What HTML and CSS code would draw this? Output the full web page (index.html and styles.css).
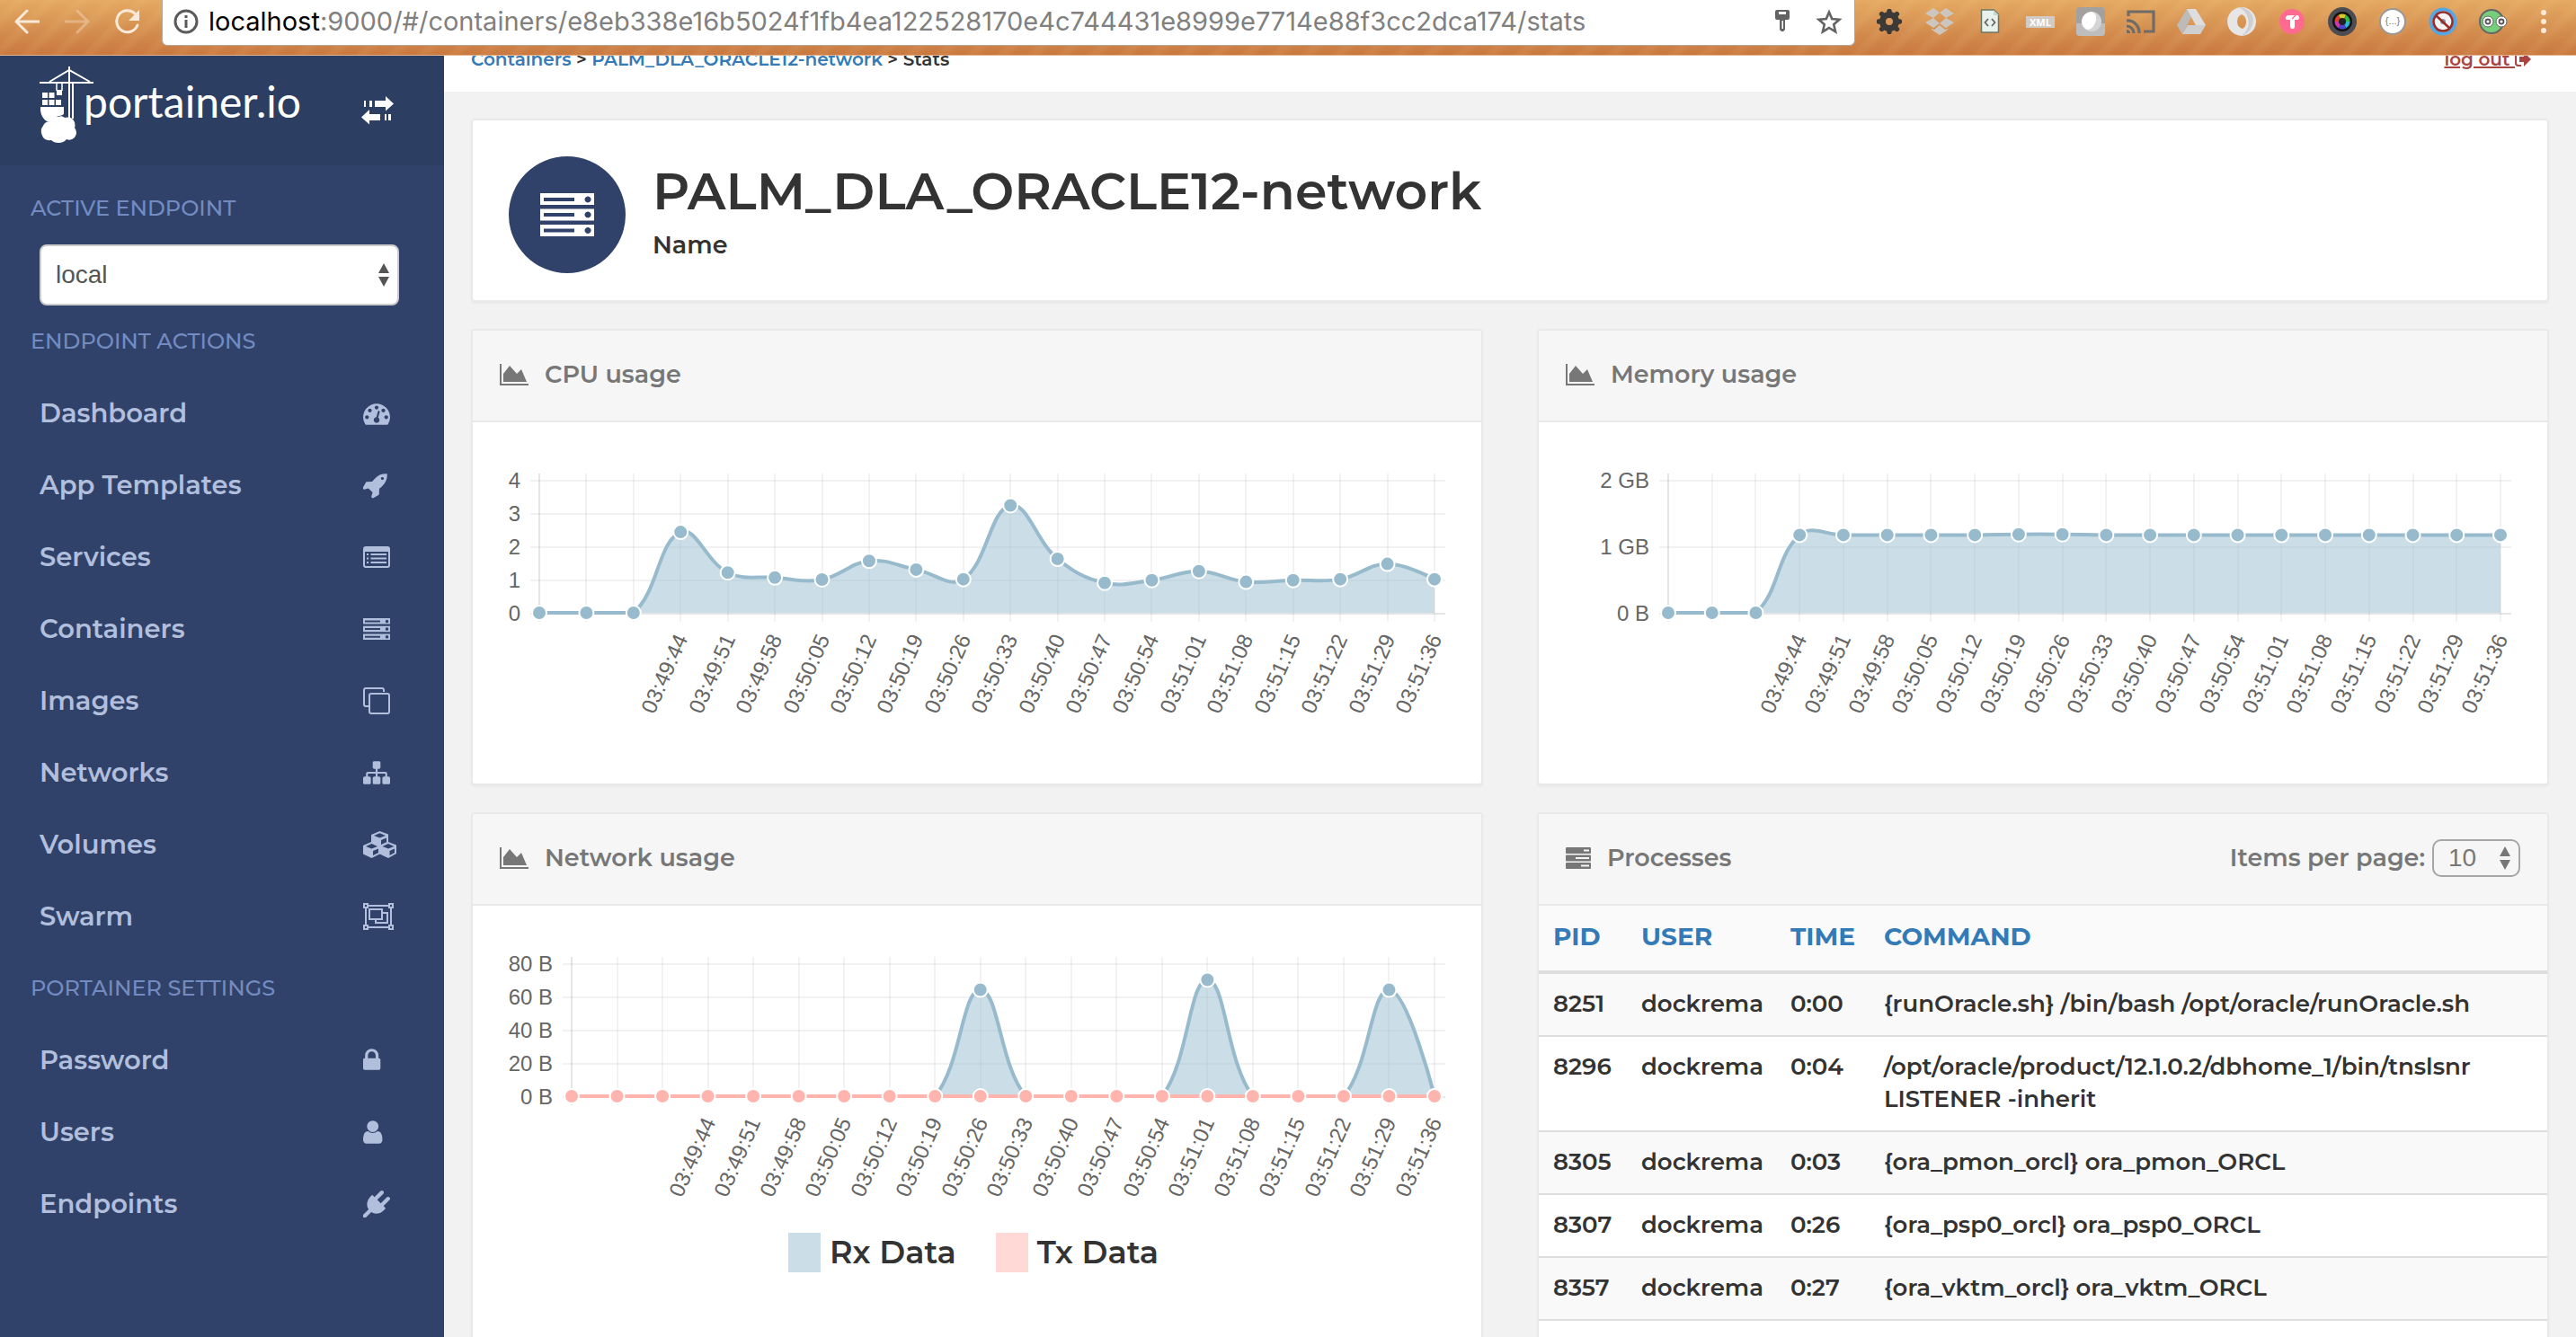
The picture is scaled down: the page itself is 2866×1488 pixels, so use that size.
FILE: index.html
```html
<!DOCTYPE html>
<html lang="en">
<head>
<meta charset="utf-8">
<title>Portainer - Container stats</title>
<link rel="stylesheet" href="styles.css">
</head>
<body>
<svg class="defs" aria-hidden="true">
  <symbol id="i-server" viewBox="0 0 60 48">
    <path fill-rule="evenodd" d="M0 0h60v13H0zM4 5v4h34V5zM53 3.500a3.500 3.500 0 1 0 .1 0zM0 17.500h60v13H0zM4 22v4h34v-4zM53 20.500a3.500 3.500 0 1 0 .1 0zM0 35h60v13H0zM4 39.500v4h34v-4zM53 38a3.500 3.500 0 1 0 .1 0z"/>
  </symbol>
  <symbol id="i-area" viewBox="0 0 32 24">
    <path d="M0 0h2v22h30v2H0zM4 20v-9l7-9 8 9 5-5 6 14z"/>
  </symbol>
</svg>

<header class="browser">
  <button class="tool" aria-label="Back"><svg width="28" height="28" viewBox="0 0 28 28" class="line"><path d="M14 2L2 14l12 12M2 14h25"/></svg></button>
  <button class="tool faded" aria-label="Forward"><svg width="28" height="28" viewBox="0 0 28 28" class="line"><path d="M14 2l12 12-12 12M26 14H1"/></svg></button>
  <button class="tool" aria-label="Reload"><svg width="28" height="28" viewBox="0 0 28 28"><path class="line" d="M25 18A12 12 0 1 1 22 5"/><path fill="#fbe9d9" d="M27 1v12H15z"/></svg></button>
  <div class="address">
    <svg width="28" height="28" viewBox="0 0 28 28"><circle cx="14" cy="14" r="12" fill="none" stroke="#5a5a5a" stroke-width="3"/><path fill="#5a5a5a" d="M12.500 7h3v3h-3zM12.500 12h3v9h-3z"/></svg>
    <span class="url"><b>localhost</b>:9000/#/containers/e8eb338e16b5024f1fb4ea122528170e4c744431e8999e7714e88f3cc2dca174/stats</span>
    <button class="inner-tool" aria-label="Saved password"><svg width="16" height="26" viewBox="0 0 16 26"><path fill="#636363" fill-rule="evenodd" d="M2 0h12q2 0 2 2v7q0 2-2 2h-3v11l-2 2H7l-2-2V11H2q-2 0-2-2V2q0-2 2-2zM4 2v3h8V2zM7.500 12v9h1.500v-9z"/></svg></button>
    <button class="inner-tool" aria-label="Bookmark"><svg width="30" height="28" viewBox="0 0 30 28"><path fill="none" stroke="#636363" stroke-width="2.600" d="M15 3.500l3.200 7.600 8.200.7-6.200 5.400 1.900 8.100-7.100-4.300-7.100 4.300 1.900-8.100-6.200-5.400 8.200-.7z"/></svg></button>
  </div>
  <button class="tool" aria-label="Settings extension"><svg width="28" height="28" viewBox="-14 -14 28 28"><circle r="7.500" fill="none" stroke="#3c3a37" stroke-width="7"/><path stroke="#3c3a37" stroke-width="5.500" stroke-linecap="round" d="M0-11v-.5M0 11v.5M-11 0h-.5M11 0h.5M-8-8l-.4-.4M8 8l.4.4M-8 8l-.4.4M8-8l.4-.4"/></svg></button>
  <button class="tool" aria-label="Dropbox"><svg width="32" height="30" viewBox="0 0 32 30"><path fill="#cdc6bf" d="M9 0l7 5-7 6-9-5zM23 0l9 6-9 5-7-6zM0 16l9-5 7 6-7 5zM32 16l-9-5-7 6 7 5zM7 23l3 1 6-5 6 5 3-1v1l-9 6-9-6z"/></svg></button>
  <button class="tool" aria-label="Source viewer"><svg width="22" height="28" viewBox="0 0 22 28"><path fill="#e9f1ed" stroke="#6c7763" stroke-width="1.500" d="M1.500 1h14l5 5v20h-19z"/><path fill="#c3d6cf" d="M15 1v6h6z"/><path fill="none" stroke="#666" stroke-width="1.800" d="M9 11l-3.500 4L9 19M13 11l3.500 4-3.500 4"/></svg></button>
  <button class="tool" aria-label="XML viewer"><span class="xml">XML</span></button>
  <button class="tool" aria-label="Egg extension"><svg width="32" height="32" viewBox="0 0 32 32"><rect width="32" height="32" rx="4" fill="#a3a19f"/><path fill="#bdbdbd" d="M0 18h32v10q0 4-4 4H4q-4 0-4-4z"/><circle cx="17" cy="16" r="11" fill="#d5d5d5"/><path fill="#fff" d="M17 5q6 2 5 9-2 10-9 11-7-2-7-10Q8 6 17 5z"/></svg></button>
  <button class="tool" aria-label="Cast"><svg width="32" height="26" viewBox="0 0 32 26"><path fill="none" stroke="#6f6b66" stroke-width="3.200" d="M2 7V2h28v22H19M0 12a13 13 0 0 1 14 14M0 18a8 8 0 0 1 8 8"/><path fill="#6f6b66" d="M0 22a4 4 0 0 1 4 4H0z"/></svg></button>
  <button class="tool" aria-label="Drive"><svg width="32" height="28" viewBox="0 0 32 28"><path fill="#bdbbb9" d="M11 0l5 9L6 28 0 18z"/><path fill="#dedede" d="M11 0h10l11 18H21z"/><path fill="#cfcfcf" d="M6 28l6-10h20l-6 10z"/></svg></button>
  <button class="tool" aria-label="Ring extension"><svg width="32" height="32" viewBox="0 0 32 32"><path fill="#e6e6e6" fill-rule="evenodd" d="M16 0a16 16 0 1 0 .1 0zM16 8q5 2 5 8t-4 8q-6-2-6-8t5-8z"/><path fill="#cfcfcf" d="M16 0q16 5 12 20-4 10-12 12 10-8 7-20-2-8-9-11z"/></svg></button>
  <button class="tool" aria-label="Toggl"><svg width="28" height="28" viewBox="0 0 28 28"><circle cx="14" cy="14" r="14" fill="#ff6a8e"/><path fill="#fff" d="M9 7h11q2 0 2 2.500T20 12h-3v8q0 2-2.500 2T12 20v-8H8q-2-1-1-3z"/><path stroke="#ff6a8e" stroke-width="1.200" d="M14 11l4-4"/></svg></button>
  <button class="tool" aria-label="Camera"><svg width="32" height="32" viewBox="0 0 32 32"><circle cx="16" cy="16" r="16" fill="#4c4d52"/><circle cx="16" cy="16" r="11" fill="#121212"/><g fill="none" stroke-width="5"><path stroke="#e0442e" d="M10 16a6 6 0 0 1 3-5"/><path stroke="#d9c928" d="M13 11a6 6 0 0 1 6 0"/><path stroke="#35b54a" d="M19 11a6 6 0 0 1 3 5"/><path stroke="#2bb7d6" d="M22 16a6 6 0 0 1-3 5"/><path stroke="#4b46d6" d="M19 21a6 6 0 0 1-6 0"/><path stroke="#cf37b2" d="M13 21a6 6 0 0 1-3-5"/></g><circle cx="16" cy="16" r="4" fill="#222"/></svg></button>
  <button class="tool" aria-label="JSON viewer"><span class="json">{...}</span></button>
  <button class="tool" aria-label="Blocker"><svg width="32" height="32" viewBox="0 0 32 32"><circle cx="16" cy="16" r="13.500" fill="#f3f3f3" stroke="#55a7e4" stroke-width="4"/><circle cx="16" cy="16" r="3" fill="#8493a3"/><path fill="none" stroke="#9b2c2a" stroke-width="2.600" d="M16 5.500a10.500 10.500 0 1 0 .1 0zM8 9l16 15"/></svg></button>
  <button class="tool" aria-label="Green face"><svg width="32" height="28" viewBox="0 0 32 28"><circle cx="14" cy="14" r="13" fill="#76ce7b" stroke="#666" stroke-width="2"/><g fill="#fff" stroke="#666" stroke-width="1"><circle cx="10" cy="14" r="6"/><circle cx="25" cy="14" r="6"/></g><g fill="none" stroke="#555" stroke-width="1.800"><circle cx="10" cy="14" r="2.500"/><circle cx="25" cy="14" r="2.500"/></g></svg></button>
  <button class="tool" aria-label="Menu"><svg width="8" height="28" viewBox="0 0 8 28"><g fill="#fbe9d9"><circle cx="4" cy="4" r="3"/><circle cx="4" cy="14" r="3"/><circle cx="4" cy="24" r="3"/></g></svg></button>
</header>

<div class="app">
  <nav class="sidebar">
    <div class="brand">
      <a class="logo" href="#/">
        <svg width="62" height="86" viewBox="0 0 62 86">
          <g fill="none" stroke="#fff" stroke-width="2"><path d="M1 18h60M12 17L34 4l23 13M34 0v58M38 18v40"/><path stroke-width="1.500" d="M20 19v8M26 19v8"/></g>
          <path fill="#fff" d="M20 26h6v6h-6zM4 29h6v6H4zM11.500 29h6v6h-6zM4 37h6v6H4zM11.500 37h6v6h-6zM19 37h6v6h-6zM2 45h26v8q-3 2-5 2-6 1-8 6H9q-6-4-7-12z"/>
          <path fill="#fff" d="M13 61q3-6 9-5 4-2 7 1 8-2 11 5 1 4 0 6 4 6 0 11-4 4-9 2-3 4-9 4-5 0-8-3-8 1-10-5-3-6 1-11 2-5 8-5z"/>
        </svg>
        <span>portainer.io</span>
      </a>
      <button class="toggle" aria-label="Toggle sidebar"><svg width="36" height="32" viewBox="0 0 36 32"><path fill="#fff" d="M3 5h2v7H3zM9 5h3v7H9zM15 5h12V0l9 8.500-9 8V12H15zM33 20h-3v7h3zM28 20h-2v7h2zM21 20H9v-5l-9 8.500 9 8V27h12z"/></svg></button>
    </div>
    <label class="group" for="endpoint">ACTIVE ENDPOINT</label>
    <select class="endpoint" id="endpoint"><option>local</option></select>
    <h2 class="group">ENDPOINT ACTIONS</h2>
    <ul>
      <li><a href="#/dashboard">Dashboard<svg width="30" height="30" viewBox="0 0 1792 1792"><path d="M384 1152q0-53-37.500-90.500t-90.500-37.500-90.500 37.500-37.500 90.500 37.500 90.500 90.500 37.500 90.500-37.500 37.500-90.500zm192-448q0-53-37.500-90.500t-90.500-37.500-90.500 37.500-37.500 90.500 37.500 90.500 90.500 37.500 90.500-37.500 37.500-90.500zm428 481l101-382q6-26-7.500-48.500t-38.500-29.500-48 6.500-30 39.500l-101 382q-60 5-107 43.500t-63 98.500q-20 77 20 146t117 89 146-20 89-117q16-60-6-117t-72-91zm660-33q0-53-37.500-90.500t-90.500-37.500-90.500 37.500-37.500 90.500 37.500 90.500 90.500 37.500 90.500-37.500 37.500-90.500zm-640-640q0-53-37.500-90.500t-90.500-37.500-90.500 37.500-37.500 90.500 37.500 90.500 90.500 37.500 90.500-37.500 37.500-90.500zm448 192q0-53-37.500-90.500t-90.500-37.500-90.500 37.500-37.500 90.500 37.500 90.500 90.500 37.500 90.500-37.500 37.500-90.500zm320 448q0 261-141 483-19 29-54 29h-1402q-35 0-54-29-141-221-141-483 0-182 71-348t191-286 286-191 348-71 348 71 286 191 191 286 71 348z"/></svg></a></li>
      <li><a href="#/templates">App Templates<svg width="30" height="30" viewBox="64 0 1792 1792"><path d="M1440 448q0-40-28-68t-68-28-68 28-28 68 28 68 68 28 68-28 28-68zm224-288q0 249-75.500 430.500t-253.500 360.500q-81 80-195 176l-20 379q-2 16-16 26l-384 224q-7 4-16 4-12 0-23-9l-64-64q-13-14-8-32l85-276-281-281-276 85q-3 1-9 1-14 0-23-9l-64-64q-17-19-5-39l224-384q10-14 26-16l379-20q96-114 176-195 188-187 358-258t431-71q14 0 24 9.500t10 22.500z"/></svg></a></li>
      <li><a href="#/services">Services<svg width="30" height="24" viewBox="0 0 30 24"><path fill-rule="evenodd" d="M3 0h24q3 0 3 3v18q0 3-3 3H3q-3 0-3-3V3q0-3 3-3zM2 6v15q0 1 1 1h24q1 0 1-1V6zM4 8h2v2H4zM8.500 8H26v2H8.500zM4 12.500h2v2H4zM8.500 12.500H26v2H8.500zM4 17h2v2H4zM8.500 17H26v2H8.500z"/></svg></a></li>
      <li><a href="#/containers">Containers<svg width="30" height="24"><use href="#i-server"/></svg></a></li>
      <li><a href="#/images">Images<svg width="30" height="30" viewBox="0 0 30 30"><g fill="none" stroke="#b2bfdc" stroke-width="2"><rect x="7" y="7" width="22" height="22" rx="2"/><path d="M23 5V3q0-2-2-2H3Q1 1 1 3v16q0 2 2 2h3"/></g></svg></a></li>
      <li><a href="#/networks">Networks<svg width="30" height="30" viewBox="0 0 1792 1792"><path d="M1792 1248v320q0 40-28 68t-68 28h-320q-40 0-68-28t-28-68v-320q0-40 28-68t68-28h96v-192h-512v192h96q40 0 68 28t28 68v320q0 40-28 68t-68 28h-320q-40 0-68-28t-28-68v-320q0-40 28-68t68-28h96v-192h-512v192h96q40 0 68 28t28 68v320q0 40-28 68t-68 28h-320q-40 0-68-28t-28-68v-320q0-40 28-68t68-28h96v-192q0-52 38-90t90-38h512v-192h-96q-40 0-68-28t-28-68v-320q0-40 28-68t68-28h320q40 0 68 28t28 68v320q0 40-28 68t-68 28h-96v192h512q52 0 90 38t38 90v192h96q40 0 68 28t28 68z"/></svg></a></li>
      <li><a href="#/volumes">Volumes<svg width="37" height="30" viewBox="0 0 37 30"><path fill-rule="evenodd" d="M18.500 0L28 3.500V12l9 3.500V25l-9 5-9.500-4.500L9.500 30 0 25.500V16l9-4V4zM18.500 2.300L12 5l6.500 2.500L25 5zM20 10v5l6-2.700V7.500zM9.500 14L3 17l6.500 2.500L16 17zM11 22v5l6-3v-4.500zM28 14l-6.500 3 6.500 2.500 6.500-2.500zM29.500 22v5l5.500-3v-4.500z"/></svg></a></li>
      <li><a href="#/swarm">Swarm<svg width="34" height="30" viewBox="0 0 34 30"><g fill="none" stroke="#b2bfdc" stroke-width="2"><path d="M3 4v22M31 4v22M4 3h26M4 27h26"/><path d="M7 7h14v11H7zM22 11h5v11H14v-4"/></g><path fill-rule="evenodd" d="M0 0h6v6H0zM2 2v2h2V2zM28 0h6v6h-6zM30 2v2h2V2zM0 24h6v6H0zM2 26v2h2v-2zM28 24h6v6h-6zM30 26v2h2v-2z"/></svg></a></li>
    </ul>
    <h2 class="group">PORTAINER SETTINGS</h2>
    <ul>
      <li><a href="#/password">Password<svg width="20" height="30" viewBox="320 0 1195 1792"><path d="M640 768h512v-192q0-106-75-181t-181-75-181 75-75 181v192zm832 96v576q0 40-28 68t-68 28h-960q-40 0-68-28t-28-68v-576q0-40 28-68t68-28h32v-192q0-184 132-316t316-132 316 132 132 316v192h32q40 0 68 28t28 68z"/></svg></a></li>
      <li><a href="#/users">Users<svg width="22" height="30" viewBox="256 0 1314 1792"><path d="M1536 1399q0 109-62.500 187t-150.500 78h-854q-88 0-150.500-78t-62.500-187q0-85 8.500-160.500t31.500-152 58.500-131 94-89 134.500-34.500q131 128 313 128t313-128q76 0 134.500 34.500t94 89 58.500 131 31.500 152 8.500 160.500zm-256-887q0 159-112.500 271.500t-271.500 112.500-271.500-112.500-112.500-271.500 112.500-271.500 271.500-112.500 271.500 112.500 112.500 271.500z"/></svg></a></li>
      <li><a href="#/endpoints">Endpoints<svg width="30" height="30" viewBox="0 0 1792 1792"><path d="M1755 453q37 38 37 90.500t-37 90.500l-401 400 150 150-160 160q-163 163-389.500 186.500t-411.500-100.500l-362 362h-181v-181l362-362q-124-185-100.500-411.500t186.500-389.500l160-160 150 150 400-401q38-37 91-37t90 37 37 90.500-37 90.500l-400 401 234 234 401-400q38-37 91-37t90 37z"/></svg></a></li>
    </ul>
  </nav>

  <main class="content">
    <div class="page-header">
      <div class="crumbs"><a href="#/containers">Containers</a> &gt; <a href="#/container">PALM_DLA_ORACLE12-network</a> &gt; Stats</div>
      <a class="logout" href="#/auth"><u>log out </u><svg width="18" height="20" viewBox="0 0 18 20"><path fill="none" stroke="#a94442" stroke-width="2" d="M7 3H4Q1 3 1 6v8q0 3 3 3h3"/><path fill="#a94442" d="M5 7h5V2l8 8-8 8v-5H5z"/></svg></a>
    </div>

    <div class="widgets">
      <section class="card summary">
        <span class="badge"><svg width="60" height="48"><use href="#i-server"/></svg></span>
        <div class="summary-text">
          <h1>PALM_DLA_ORACLE12-network</h1>
          <p>Name</p>
        </div>
      </section>

      <section class="card">
        <h3><svg width="32" height="24"><use href="#i-area"/></svg>CPU usage</h3>
        <svg class="chart" id="cpu" viewBox="0 0 1122 402"></svg>
      </section>

      <section class="card">
        <h3><svg width="32" height="24"><use href="#i-area"/></svg>Memory usage</h3>
        <svg class="chart" id="memory" viewBox="0 0 1122 402"></svg>
      </section>

      <section class="card">
        <h3><svg width="32" height="24"><use href="#i-area"/></svg>Network usage</h3>
        <svg class="chart" id="network" viewBox="0 0 1122 364"></svg>
        <ul class="legend">
          <li><i class="rx"></i>Rx Data</li>
          <li><i class="tx"></i>Tx Data</li>
        </ul>
      </section>

      <section class="card">
        <h3><svg width="28" height="24" viewBox="0 0 28 24"><path fill-rule="evenodd" d="M1 0h26q1 0 1 1v5q0 1-1 1H1Q0 7 0 6V1q0-1 1-1zM20 2.500v2h6v-2zM1 8.500h26q1 0 1 1v5q0 1-1 1H1q-1 0-1-1v-5q0-1 1-1zM11 11v2h15v-2zM1 17h26q1 0 1 1v5q0 1-1 1H1q-1 0-1-1v-5q0-1 1-1zM17 19.500v2h9v-2z"/></svg>Processes
          <span class="pager"><label for="per-page">Items per page:</label><select id="per-page"><option>10</option></select></span>
        </h3>
        <table>
          <thead><tr><th class="pid"><a href="#pid">PID</a></th><th class="user"><a href="#user">USER</a></th><th class="time"><a href="#time">TIME</a></th><th><a href="#command">COMMAND</a></th></tr></thead>
          <tbody>
            <tr><td>8251</td><td>dockrema</td><td>0:00</td><td>{runOracle.sh} /bin/bash /opt/oracle/runOracle.sh</td></tr>
            <tr><td>8296</td><td>dockrema</td><td>0:04</td><td>/opt/oracle/product/12.1.0.2/dbhome_1/bin/tnslsnr LISTENER -inherit</td></tr>
            <tr><td>8305</td><td>dockrema</td><td>0:03</td><td>{ora_pmon_orcl} ora_pmon_ORCL</td></tr>
            <tr><td>8307</td><td>dockrema</td><td>0:26</td><td>{ora_psp0_orcl} ora_psp0_ORCL</td></tr>
            <tr><td>8357</td><td>dockrema</td><td>0:27</td><td>{ora_vktm_orcl} ora_vktm_ORCL</td></tr>
          </tbody>
        </table>
      </section>
    </div>
  </main>
</div>
<script src="charts.js"></script>
</body>
</html>
```
FILE: styles.css
```css
* { box-sizing: border-box; }

body {
  margin: 0;
  height: 100vh;
  display: flex;
  flex-direction: column;
  overflow: hidden;
  font: 600 26px/36px Montserrat, Inter, "Liberation Sans", sans-serif;
  color: #333;
  background: #f2f2f2;
}

h1, h2, h3, p, ul { margin: 0; padding: 0; font-weight: 600; }
ul { list-style: none; }
a { color: #337ab7; text-decoration: none; }
button { padding: 0; border: 0; background: none; font: inherit; }
svg { display: block; flex: none; }
.defs { position: absolute; width: 0; height: 0; }

/* Browser bar */
.browser {
  flex: none;
  display: flex;
  height: 62px;
  padding: 0 8px 0 2px;
  border-bottom: 1px solid #e6b48d;
  background:
    repeating-linear-gradient(135deg, rgba(255, 220, 160, 0) 0 9px, rgba(255, 220, 160, .08) 14px 18px, rgba(255, 220, 160, 0) 24px),
    linear-gradient(#e5aa63, #d48e4f 55%, #c9783f);
}
.tool { flex: none; width: 56px; height: 48px; display: grid; place-items: center; }
.faded { opacity: .35; }
.line { fill: none; stroke: #fbe9d9; stroke-width: 3; stroke-linecap: round; }
.address {
  flex: 1;
  min-width: 0;
  display: flex;
  align-items: center;
  height: 51px;
  margin: 0 10px;
  padding: 0 2px 2px 12px;
  border: solid #b4a79a;
  border-width: 0 1px 1px;
  border-radius: 0 0 6px 6px;
  background: #fff;
}
.url {
  flex: 1;
  min-width: 0;
  padding-left: 11px;
  overflow: hidden;
  white-space: nowrap;
  font: 400 29px/36px Inter, sans-serif;
  color: #808080;
}
.url b { font-weight: 400; color: #000; }
.inner-tool { width: 52px; display: grid; place-items: center; }
.xml { padding: 0 4px; background: #d2cbc5; color: #fff; font: 700 11px/13px "Open Sans", sans-serif; }
.json {
  width: 30px;
  height: 30px;
  border: 2px solid #989898;
  border-radius: 50%;
  background: #fff;
  color: #777;
  font: 400 11px/24px "Liberation Sans", sans-serif;
}

.app { flex: 1; min-height: 0; display: flex; }

/* Sidebar */
.sidebar { flex: none; width: 494px; background: #30426a; overflow: hidden; }
.brand { display: flex; height: 122px; margin-bottom: 8px; padding: 12px 56px 0 43px; background: #2d3e63; }
.logo { flex: 1; display: flex; height: 86px; color: #fff; font: 400 48px/78px Lato, sans-serif; }
.logo span { margin-left: -12px; }
.toggle { height: 98px; display: grid; place-items: center; }
.group { display: block; padding-left: 34px; font-size: 24px; font-weight: 500; line-height: 80px; color: #738bc0; }
select { appearance: none; font: 400 28px/36px "Liberation Sans", sans-serif; }
.endpoint {
  display: block;
  width: 400px;
  height: 68px;
  margin-left: 44px;
  padding: 0 16px;
  border: 2px solid #ccc;
  border-radius: 8px;
  color: #555;
  background: #fff url("data:image/svg+xml,%3Csvg xmlns='http://www.w3.org/2000/svg' width='14' height='26'%3E%3Cpath fill='%23555' d='M7 0l6 11H1zM7 26l6-11H1z'/%3E%3C/svg%3E") no-repeat right 8px center;
}
.sidebar li a {
  display: grid;
  grid-template-columns: 1fr 90px;
  align-items: center;
  height: 80px;
  padding-left: 44px;
  font-size: 29px;
  color: #b2bfdc;
}
.sidebar li svg { fill: #b2bfdc; }

/* Content */
.content { flex: 1; min-width: 0; overflow: hidden; }
.page-header {
  display: flex;
  justify-content: space-between;
  margin-top: -8px;
  padding: 0 50px 24px 30px;
  background: #fff;
  font-size: 20px;
  line-height: 24px;
}
.logout { display: flex; align-items: center; color: #a94442; }
.logout u { white-space: pre; }
.widgets { display: grid; grid-template-columns: 1fr 1fr; gap: 30px 60px; padding: 30px; }
.card {
  min-width: 0;
  border: 2px solid #e9e9e9;
  border-radius: 4px;
  background: #fff;
  box-shadow: 0 2px 2px rgba(0, 0, 0, .04);
}
.summary { grid-column: 1 / -1; display: flex; align-items: center; gap: 30px; height: 204px; padding: 10px 40px 0; }
.badge { display: grid; place-items: center; width: 130px; height: 130px; border-radius: 50%; background: #30426a; fill: #fff; }
.summary-text { padding-bottom: 6px; }
.summary h1 { font-size: 57px; line-height: 64px; }
.summary p { font-size: 27px; line-height: 36px; padding-top: 10px; }
.card h3 {
  display: flex;
  align-items: center;
  gap: 18px;
  height: 102px;
  padding: 0 30px 2px;
  border-bottom: 2px solid #e9e9e9;
  background: #f6f6f6;
  color: #777;
  fill: #777;
  font-size: 27px;
}
.pager { margin-left: auto; display: flex; align-items: center; gap: 8px; }
.pager select {
  width: 98px;
  height: 42px;
  padding: 0 16px;
  border: 2px solid #a6a6a6;
  border-radius: 10px;
  color: #777;
  background: url("data:image/svg+xml,%3Csvg xmlns='http://www.w3.org/2000/svg' width='14' height='26'%3E%3Cpath fill='%23777' d='M7 0l6 11H1zM7 26l6-11H1z'/%3E%3C/svg%3E") no-repeat right 8px center;
}

/* Charts */
.chart { width: 100%; height: auto; }
.chart text { font: 400 24px "Liberation Sans", sans-serif; fill: #666; text-anchor: end; dominant-baseline: central; }
.legend { display: flex; justify-content: center; gap: 44px; padding: 0 8px 100px 0; font-size: 35px; line-height: 44px; }
.legend li { display: flex; gap: 10px; }
.legend i { width: 36px; height: 44px; }
.rx { background: #cbdde6; }
.tx { background: #ffd9d6; }

/* Processes */
table { width: 100%; border-collapse: separate; border-spacing: 0; table-layout: fixed; }
th, td { padding: 16px; text-align: left; vertical-align: top; }
th { height: 76px; font-size: 28px; font-weight: 700; border-bottom: 4px solid #ddd; background: #fafafa; }
.pid { width: 98px; }
.user { width: 166px; }
.time { width: 104px; }
td { padding: 15px 16px 17px; border-bottom: 2px solid #ddd; }
tbody tr:nth-child(odd) { background: #f9f9f9; }
```
FILE: charts.js
```js
const times = ["", "", "", "03:49:44", "03:49:51", "03:49:58", "03:50:05", "03:50:12", "03:50:19",
  "03:50:26", "03:50:33", "03:50:40", "03:50:47", "03:50:54", "03:51:01", "03:51:08", "03:51:15",
  "03:51:22", "03:51:29", "03:51:36"];
const BLUE = "#97bbcd";
const PINK = "#ffb4ae";

// Bezier path through the points, control points kept inside the plot.
function smoothPath(points, top, bottom) {
  const clamp = y => Math.min(bottom, Math.max(top, y));
  const controls = points.map((p, i) => {
    if (i === 0 || i === points.length - 1) return { before: p, after: p };
    const a = points[i - 1], b = points[i + 1];
    const da = Math.hypot(p.x - a.x, p.y - a.y), db = Math.hypot(b.x - p.x, b.y - p.y);
    const fa = 0.4 * da / (da + db), fb = 0.4 - fa;
    return {
      before: { x: p.x - fa * (b.x - a.x), y: clamp(p.y - fa * (b.y - a.y)) },
      after: { x: p.x + fb * (b.x - a.x), y: clamp(p.y + fb * (b.y - a.y)) }
    };
  });
  let d = `M${points[0].x} ${points[0].y}`;
  for (let i = 1; i < points.length; i++) {
    const c = controls[i - 1].after, e = controls[i].before, p = points[i];
    d += `C${c.x} ${c.y} ${e.x} ${e.y} ${p.x} ${p.y}`;
  }
  return d;
}

function drawChart(id, left, max, yLabels, series) {
  const right = 1070, top = 64, bottom = 212;
  const step = (right - left) / (times.length - 1);
  let out = "";
  yLabels.forEach((label, i) => {
    const y = Math.round(bottom - (bottom - top) * i / (yLabels.length - 1));
    const tone = i === 0 ? 0.1 : 0.05;
    out += `<path d="M${left - 10} ${y + 1}H${right + 12}" stroke="rgba(0,0,0,${tone})" stroke-width="2"/>`;
    out += `<text x="${left - 21}" y="${y}">${label}</text>`;
  });
  times.forEach((label, i) => {
    const x = Math.round(left + step * i);
    const tone = i === 0 ? 0.1 : 0.05;
    out += `<path d="M${x} ${top - 7}V${bottom + 10}" stroke="rgba(0,0,0,${tone})" stroke-width="2"/>`;
    out += `<text transform="translate(${x + 1} ${bottom + 25}) rotate(-66)">${label}</text>`;
  });
  series.forEach(({ values, color }) => {
    const points = values.map((v, i) => ({ x: left + step * i, y: bottom - v / max * (bottom - top) }));
    const line = smoothPath(points, top, bottom);
    out += `<path d="${line}V${bottom}H${left}Z" fill="${color}" fill-opacity=".5"/>`;
    out += `<path d="${line}" fill="none" stroke="${color}" stroke-width="4"/>`;
    points.forEach(p => {
      out += `<circle cx="${p.x}" cy="${p.y}" r="8" fill="${color}" stroke="#fff" stroke-width="2"/>`;
    });
  });
  document.getElementById(id).innerHTML = out;
}

drawChart("cpu", 74, 4, ["0", "1", "2", "3", "4"], [
  { color: BLUE, values: [0, 0, 0, 2.43, 1.21, 1.06, 1, 1.56, 1.3, 1.01, 3.23, 1.62, 0.9, 0.98, 1.25, 0.93, 0.98, 1.01, 1.47, 1.01] }
]);
drawChart("memory", 144, 2, ["0 B", "1 GB", "2 GB"], [
  { color: BLUE, values: [0, 0, 0, 1.17, 1.17, 1.17, 1.17, 1.17, 1.18, 1.18, 1.17, 1.17, 1.17, 1.17, 1.17, 1.17, 1.17, 1.17, 1.17, 1.17] }
]);
drawChart("network", 110, 80, ["0 B", "20 B", "40 B", "60 B", "80 B"], [
  { color: BLUE, values: [0, 0, 0, 0, 0, 0, 0, 0, 0, 64, 0, 0, 0, 0, 70, 0, 0, 0, 64, 0] },
  { color: PINK, values: Array(20).fill(0) }
]);
```
